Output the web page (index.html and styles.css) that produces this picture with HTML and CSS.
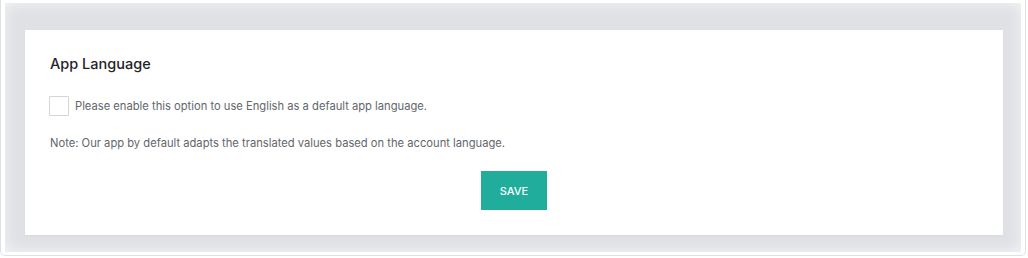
FILE: index.html
```html
<!DOCTYPE html>
<html lang="en">
    <head>
        <meta charset="UTF-8">
        <meta name="viewport" content="width=device-width, initial-scale=1.0">
        <title>App Language</title>
        <link rel="stylesheet" href="styles.css">
    </head>
    <body>
        <div class="frame">
            <div class="panel">
                <!-- Carte des réglages -->
                <div class="card">
                    <h2 class="card-title">App Language</h2>
                    <label class="option">
                        <input type="checkbox" class="check" />
                        <span>Please enable this option to use English as a default app language.</span>
                    </label>
                    <p class="note">Note: Our app by default adapts the translated values based on the account language.</p>
                    <div class="actions">
                        <button class="save-button">SAVE</button>
                    </div>
                </div>
            </div>
        </div>
    </body>
</html>
```

FILE: styles.css
```css
/* Style global */
body, html {
    margin: 0;
    padding: 0;
    background-color: #ffffff;
    font-family: 'Inter', 'Noto Sans', sans-serif;
}

/* Cadre extérieur */
.frame {
    height: 256px;
    box-sizing: border-box;
    border: 1px solid #dde2ea;
    border-top: none;
    border-radius: 0 0 5px 5px;
    padding: 3px 4px 3px 4px;
    margin-right: 2px;
}

.panel {
    height: 100%;
    box-sizing: border-box;
    background-color: #dfe1e5;
    box-shadow: inset 0 0 14px rgba(255, 255, 255, 0.7);
    padding: 27px 18px 15px 20px;
}

/* Carte */
.card {
    background-color: #ffffff;
    height: 205px;
    box-sizing: border-box;
    padding: 25px 25px 0 25px;
    box-shadow: 0 1px 3px rgba(0, 0, 0, 0.04);
}

.card-title {
    margin: 0;
    font-size: 14.5px;
    font-weight: 500;
    color: #1f2329;
    line-height: 18px;
}

.option {
    display: flex;
    align-items: center;
    margin-top: 23px;
    font-size: 11.2px;
    color: #62666c;
}

.check {
    appearance: none;
    -webkit-appearance: none;
    width: 20px;
    height: 20px;
    margin: 0 6px 0 -1px;
    border: 1px solid #d3d5d9;
    border-radius: 1px;
    background-color: #ffffff;
}

.note {
    margin: 19px 0 0 0;
    font-size: 11.2px;
    line-height: 16px;
    color: #62666c;
}

.actions {
    display: flex;
    justify-content: center;
    margin-top: 20px;
}

.save-button {
    width: 66px;
    height: 39px;
    border: none;
    background-color: #20ad9c;
    color: #ffffff;
    font-family: 'Inter', 'Noto Sans', sans-serif;
    font-size: 11px;
    font-weight: 500;
    cursor: pointer;
}
```
